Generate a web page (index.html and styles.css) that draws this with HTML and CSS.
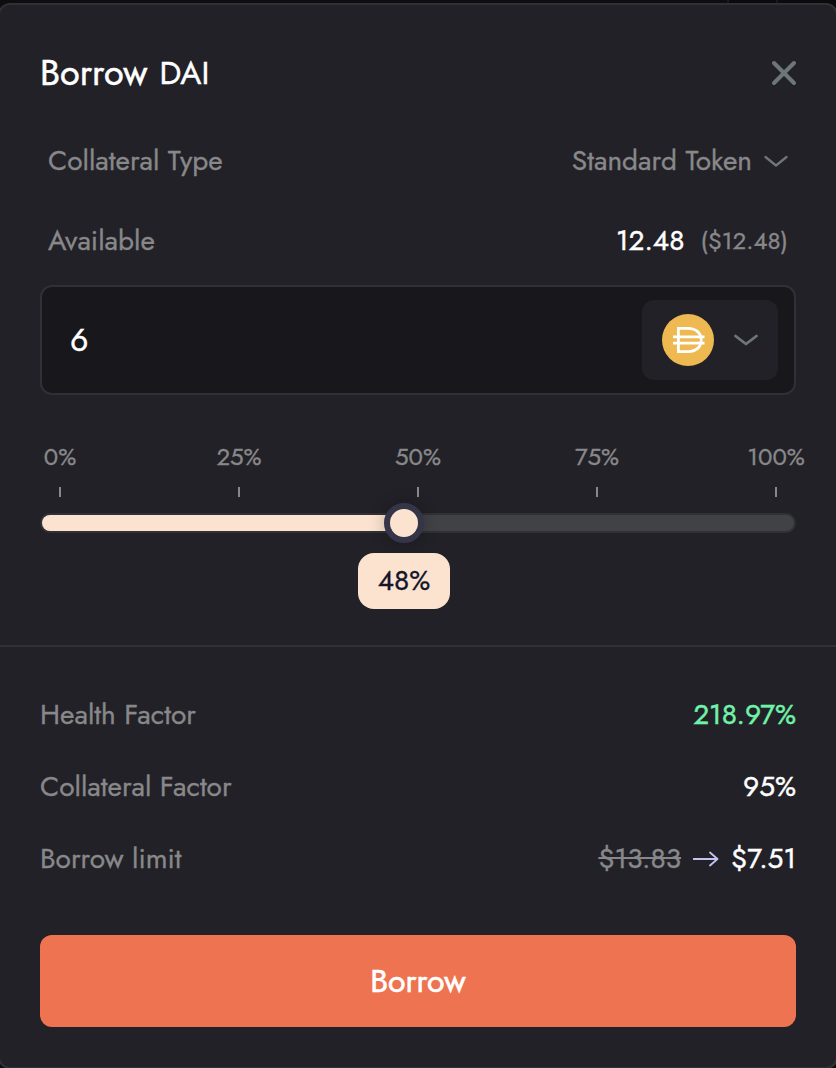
FILE: index.html
```html
<!DOCTYPE html>
<html lang="en">
<head>
<meta charset="utf-8">
<title>Borrow DAI</title>
<link rel="stylesheet" href="styles.css">
</head>
<body>
<main class="modal">
  <header class="header">
    <h1 class="title"><span class="title-action">Borrow</span><span class="title-token">DAI</span></h1>
    <svg class="close" width="26" height="26" viewBox="0 0 26 26"><path d="M3 3L23 23M23 3L3 23"/></svg>
  </header>
  <section class="form">
    <div class="row">
      <span>Collateral Type</span>
      <span class="select"><span>Standard Token</span><svg class="chevron" width="24" height="14" viewBox="0 0 24 14"><path d="M1.500 3L12 11.500L22.500 3"/></svg></span>
    </div>
    <div class="row">
      <span>Available</span>
      <span class="balance"><span class="amount">12.48</span><span class="fiat">($12.48)</span></span>
    </div>
    <div class="field">
      <span class="value">6</span>
      <div class="token">
        <svg width="52" height="52" viewBox="0 0 52 52">
          <circle cx="26" cy="26" r="26" fill="#edb950"/>
          <g fill="none" stroke="#fff" stroke-width="2.800">
            <path d="M16.400 14.400H26C34 14.400 39.200 19 39.200 26S34 37.600 26 37.600H16.400Z"/>
            <path d="M11 22.900H42.500M11 29.200H42.500"/>
          </g>
        </svg>
        <svg class="chevron bold" width="24" height="14" viewBox="0 0 24 14"><path d="M1.500 3L12 11L22.500 3"/></svg>
      </div>
    </div>
    <div class="scale">
      <div class="mark"><span>0%</span></div>
      <div class="mark"><span>25%</span></div>
      <div class="mark"><span>50%</span></div>
      <div class="mark"><span>75%</span></div>
      <div class="mark"><span>100%</span></div>
    </div>
    <div class="track">
      <div class="fill"></div>
      <div class="thumb"></div>
      <div class="tooltip">48%</div>
    </div>
  </section>
  <section class="summary">
    <div class="line"><span>Health Factor</span><span class="strong good">218.97%</span></div>
    <div class="line"><span>Collateral Factor</span><span class="strong">95%</span></div>
    <div class="line"><span>Borrow limit</span>
      <span class="change"><s>$13.83</s><svg width="26" height="16" viewBox="0 0 26 16"><path d="M0.500 8H24M17 1.500L24.500 8L17 14.500"/></svg><span class="strong">$7.51</span></span>
    </div>
    <button class="submit">Borrow</button>
  </section>
</main>
</body>
</html>
```
FILE: styles.css
```css
* { box-sizing: border-box; }
html, body { height: 100%; overflow: hidden; }
body {
  margin: 0;
  padding-top: 3px;
  background: linear-gradient(90deg, #0e0e10 727px, #19191b 727px 729px, #0b0b0d 729px 776px, #19191b 776px 778px, #0b0b0d 778px);
  font-family: Jost, Lato, sans-serif;
  font-size: 28px;
  line-height: 40px;
  color: #88888a;
  white-space: nowrap;
  -webkit-text-stroke: 0.3px currentColor;
}
.modal {
  height: 1066px;
  margin: 0 -2px;
  background: #222127;
  border: 2px solid #313036;
  border-radius: 12px;
}
.header {
  display: flex;
  align-items: center;
  justify-content: space-between;
  height: 116px;
  padding: 20px 39px 0 40px;
}
.title {
  display: flex;
  align-items: center;
  gap: 12px;
  margin: 0;
  color: #fff;
  font-size: 36px;
  font-weight: 400;
  -webkit-text-stroke: 0.5px #fff;
}
.title-action { padding-bottom: 2px; }
.title-token { font-size: 32px; -webkit-text-stroke: 0.4px #fff; }
.close { fill: none; stroke: #6d7679; stroke-width: 4; stroke-linecap: round; }
.form { height: 524px; padding: 0 40px; }
.row {
  display: flex;
  align-items: center;
  justify-content: space-between;
  height: 80px;
  padding: 0 8px;
}
.select { display: flex; align-items: center; gap: 12px; }
.chevron { fill: none; stroke: #6d7679; stroke-width: 2.300; stroke-linecap: round; stroke-linejoin: round; }
.chevron.bold { stroke-width: 2.800; }
.balance { display: flex; align-items: center; gap: 16px; }
.amount, .strong { color: #fff; -webkit-text-stroke: 0.4px currentColor; }
.strong.good { color: #70f3a9; }
.fiat { font-size: 24px; }
.field {
  display: flex;
  align-items: center;
  justify-content: space-between;
  height: 110px;
  margin-top: 4px;
  padding: 0 16px 0 28px;
  background: #18171b;
  border: 2px solid #313036;
  border-radius: 12px;
}
.value { color: #fff; font-size: 32px; -webkit-text-stroke: 0.4px #fff; }
.token {
  display: flex;
  align-items: center;
  gap: 20px;
  width: 136px;
  height: 80px;
  padding-left: 20px;
  background: #222127;
  border-radius: 12px;
}
.scale {
  display: flex;
  justify-content: space-between;
  margin: 42px 19px 16px;
}
.mark {
  display: flex;
  flex-direction: column;
  align-items: center;
  gap: 10px;
  width: 2px;
  font-size: 24px;
}
.mark::after { content: ""; width: 2px; height: 10px; background: #88888a; }
.track {
  position: relative;
  height: 20px;
  background: #414246;
  border: 2px solid #313036;
  border-radius: 10px;
}
.fill { width: 362px; height: 16px; background: #fbe3cf; border-radius: 8px 0 0 8px; }
.thumb {
  position: absolute;
  left: 342px;
  top: -12px;
  width: 40px;
  height: 40px;
  background: #fbe3cf;
  border: 6px solid #353549;
  border-radius: 50%;
  box-shadow: 0 0 16px rgba(0, 0, 0, 0.25);
}
.tooltip {
  position: absolute;
  left: 316px;
  top: 38px;
  width: 92px;
  height: 56px;
  background: #fbe3cf;
  border-radius: 16px;
  color: #14152a;
  line-height: 56px;
  text-align: center;
}
.summary { padding: 32px 40px 0; border-top: 2px solid #313036; }
.line { display: flex; align-items: center; justify-content: space-between; height: 72px; }
.change { display: flex; align-items: center; gap: 12px; }
.change svg { fill: none; stroke: #c4c3f0; stroke-width: 1.800; stroke-linecap: round; stroke-linejoin: round; }
.change s { text-decoration-thickness: 2px; }
.submit {
  display: block;
  width: 100%;
  height: 92px;
  margin-top: 40px;
  padding: 0;
  background: #ee7451;
  border: 0;
  border-radius: 12px;
  color: #fff;
  font: 400 32px/92px Jost, Lato, sans-serif;
  -webkit-text-stroke: 0.6px #fff;
}
```
